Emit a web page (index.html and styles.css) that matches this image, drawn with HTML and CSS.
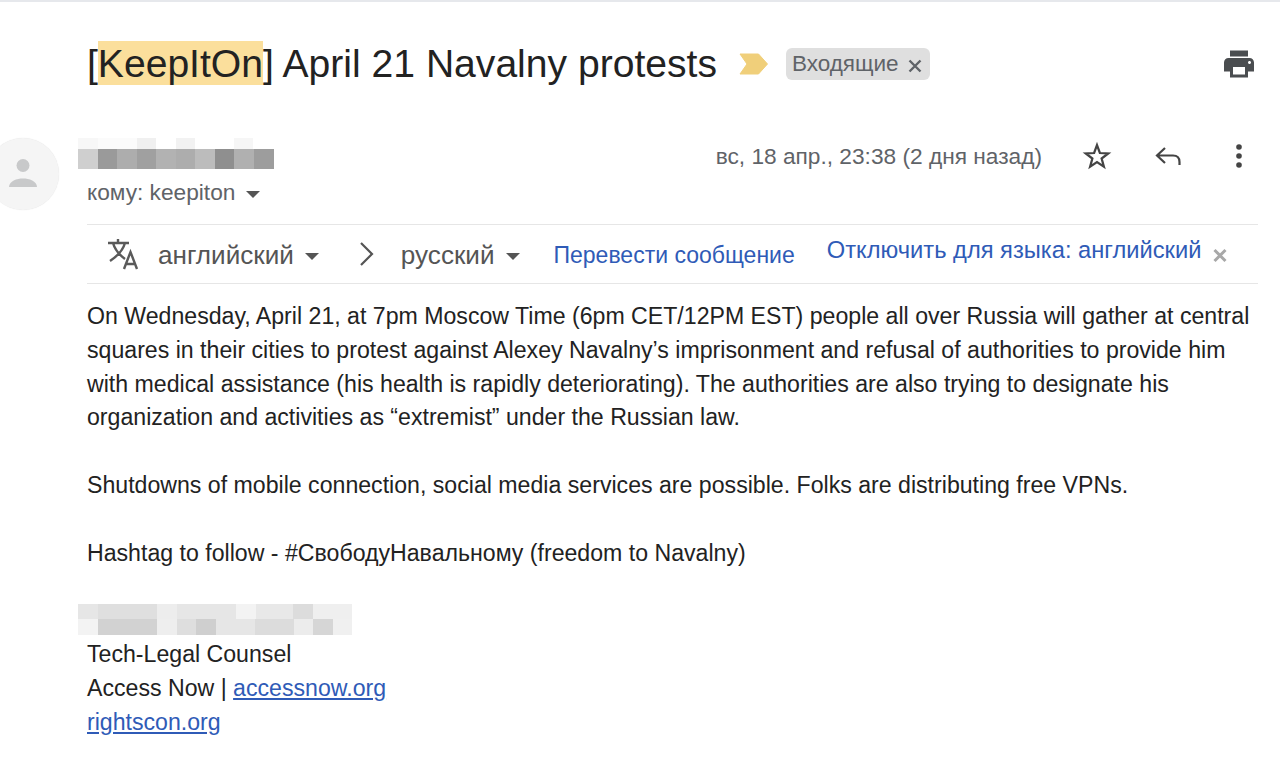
FILE: index.html
```html
<!DOCTYPE html>
<html lang="ru">
<head>
<meta charset="utf-8">
<title>[KeepItOn] April 21 Navalny protests</title>
<link rel="stylesheet" href="styles.css">
</head>
<body>
<main class="page">
  <header class="subject-row">
    <h1 class="subject">[<span class="hl">KeepItOn</span>] April 21 Navalny protests</h1>
    <svg class="marker" width="30" height="22" viewBox="0 0 30 22"><path d="M1 1H19.500L28.500 11L19.500 21H1L8 11Z" fill="#f0cf7a" stroke="#f0cf7a" stroke-linejoin="round"/></svg>
    <span class="label">Входящие<svg class="label-x" width="16" height="16" viewBox="0 0 16 16"><path d="M2.500 2.500L13.500 13.500M13.500 2.500L2.500 13.500" stroke="#5f6368" stroke-width="2.400"/></svg></span>
    <svg class="print" width="36" height="36" viewBox="0 0 24 24"><path d="M19 8H5c-1.660 0-3 1.340-3 3v6h4v4h12v-4h4v-6c0-1.660-1.340-3-3-3zm-3 11H8v-5h8v5zm3-7c-.55 0-1-.45-1-1s.45-1 1-1 1 .45 1 1-.45 1-1 1zm-1-9H6v4h12V3z" fill="#4a4d50"/></svg>
  </header>

  <section class="sender-row">
    <div class="avatar"><svg width="36" height="36" viewBox="0 0 36 36"><circle cx="18" cy="9.500" r="6.500" fill="#c8c9ca"/><path d="M4 31c0-6 8-8.500 14-8.500S32 25 32 31Z" fill="#c8c9ca"/></svg></div>
    <div class="sender-info">
      <svg class="blur-name" width="196" height="36" viewBox="0 0 196 36" shape-rendering="crispEdges">
        <g>
          <rect x="0" y="0" width="20" height="11" fill="#f7f7f7"/><rect x="20" y="0" width="39" height="11" fill="#fbfbfb"/><rect x="59" y="0" width="19" height="11" fill="#f0f0f0"/><rect x="98" y="0" width="19" height="11" fill="#f2f2f2"/><rect x="156" y="0" width="19" height="11" fill="#f6f6f6"/>
          <rect x="0" y="11" width="20" height="20" fill="#cfcfcf"/><rect x="20" y="11" width="19" height="20" fill="#9a9a9a"/><rect x="39" y="11" width="20" height="20" fill="#adadad"/><rect x="59" y="11" width="19" height="20" fill="#a0a0a0"/><rect x="78" y="11" width="20" height="20" fill="#b2b2b2"/><rect x="98" y="11" width="19" height="20" fill="#adadad"/><rect x="117" y="11" width="20" height="20" fill="#bcbcbc"/><rect x="137" y="11" width="19" height="20" fill="#8f8f8f"/><rect x="156" y="11" width="20" height="20" fill="#b0b0b0"/><rect x="176" y="11" width="20" height="20" fill="#9d9d9d"/>
        </g>
      </svg>
      <div class="to">кому: keepiton<span class="caret caret-to"></span></div>
    </div>
    <div class="meta">
      <span class="date">вс, 18 апр., 23:38 (2 дня назад)</span>
      <svg class="star" width="30" height="30" viewBox="0 0 24 24"><path d="M12 3.300L14.300 9.600L21 9.900L15.700 14L17.500 20.500L12 16.800L6.500 20.500L8.300 14L3 9.900L9.700 9.600Z" fill="none" stroke="#444" stroke-width="1.800" stroke-linejoin="miter"/></svg>
      <svg class="reply" width="30" height="30" viewBox="0 0 30 30"><path d="M12 7L4 14.500L12 22M4 14.500H20C24 14.500 26.500 17 26.500 21V24" fill="none" stroke="#444" stroke-width="2.200"/></svg>
      <svg class="dots" width="8" height="26" viewBox="0 0 8 26"><circle cx="4" cy="4" r="2.800" fill="#444"/><circle cx="4" cy="13" r="2.800" fill="#444"/><circle cx="4" cy="22" r="2.800" fill="#444"/></svg>
    </div>
  </section>

  <nav class="translate-bar">
    <svg class="tr-icon" width="36" height="36" viewBox="0 0 36 36"><path d="M3 7H24M13 3V7M8 7C10 14 16 20 20 23M20 7C18 14 11 21 5 25" fill="none" stroke="#5a5a5a" stroke-width="2.400"/><path d="M19 33L25.500 16L32 33M21.500 28H29.500" fill="none" stroke="#5a5a5a" stroke-width="2.400"/></svg>
    <span class="lang lang-from">английский<span class="caret"></span></span>
    <svg class="chev" width="18" height="26" viewBox="0 0 18 26"><path d="M3 2L14 13L3 24" fill="none" stroke="#555" stroke-width="2.200"/></svg>
    <span class="lang lang-to">русский<span class="caret"></span></span>
    <a class="tr-link tr-main" href="#">Перевести сообщение</a>
    <a class="tr-link tr-off" href="#">Отключить для языка: английский</a>
    <svg class="tr-x" width="16" height="16" viewBox="0 0 16 16"><path d="M2.500 3L13.500 14M13.500 3L2.500 14" stroke="#a8a8a8" stroke-width="3"/></svg>
  </nav>

  <article class="body">
    <p>On Wednesday, April 21, at 7pm Moscow Time (6pm CET/12PM EST) people all over Russia will gather at central squares in their cities to protest against Alexey Navalny’s imprisonment and refusal of authorities to provide him with medical assistance (his health is rapidly deteriorating). The authorities are also trying to designate his organization and activities as “extremist” under the Russian law.</p>
    <p>Shutdowns of mobile connection, social media services are possible. Folks are distributing free VPNs.</p>
    <p>Hashtag to follow - #СвободуНавальному (freedom to Navalny)</p>
    <svg class="blur-sig" width="274" height="31" viewBox="0 0 274 31" shape-rendering="crispEdges">
      <rect width="274" height="31" fill="#f1f1f1"/>
      <rect x="0" y="0" width="20" height="15" fill="#e6e6e6"/><rect x="20" y="0" width="59" height="15" fill="#dfdfdf"/><rect x="79" y="0" width="20" height="15" fill="#ededed"/><rect x="99" y="0" width="59" height="15" fill="#e6e6e6"/><rect x="158" y="0" width="20" height="15" fill="#f3f3f3"/><rect x="178" y="0" width="39" height="15" fill="#e8e8e8"/><rect x="215" y="0" width="20" height="15" fill="#dcdcdc"/><rect x="235" y="0" width="39" height="15" fill="#efefef"/>
      <rect x="0" y="15" width="20" height="16" fill="#f3f3f3"/><rect x="20" y="15" width="59" height="16" fill="#d2d2d2"/><rect x="79" y="15" width="20" height="16" fill="#eeeeee"/><rect x="99" y="15" width="19" height="16" fill="#dedede"/><rect x="118" y="15" width="20" height="16" fill="#cfcfcf"/><rect x="138" y="15" width="39" height="16" fill="#e6e6e6"/><rect x="177" y="15" width="39" height="16" fill="#dcdcdc"/><rect x="216" y="15" width="20" height="16" fill="#ececec"/><rect x="235" y="15" width="20" height="16" fill="#d6d6d6"/><rect x="255" y="15" width="19" height="16" fill="#f0f0f0"/>
    </svg>
    <div class="signature">
      <div>Tech-Legal Counsel</div>
      <div>Access Now | <a href="#">accessnow.org</a></div>
      <div><a href="#">rightscon.org</a></div>
    </div>
  </article>
</main>
</body>
</html>
```
FILE: styles.css
```css
* { box-sizing: border-box; }
html, body { margin: 0; height: 100%; }
body {
  background: #fff;
  font-family: "Liberation Sans", Arial, sans-serif;
  color: #222;
  overflow: hidden;
}
.page {
  height: 775px;
  border-top: 2px solid #e6e8ec;
  padding-right: 22px;
}
.subject-row {
  display: flex;
  align-items: flex-start;
  height: 76px;
  padding: 48px 0 0 87px;
}
.subject {
  margin: -8px 0 0;
  font-size: 39.100px;
  font-weight: 400;
  line-height: 44px;
  height: 44px;
  white-space: nowrap;
}
.hl { background: #fbdf9c; padding-top: 1px; }
.marker { margin: 3px 0 0 22px; }
.label {
  display: inline-flex;
  align-items: center;
  flex: none;
  width: 144px;
  height: 32px;
  margin: -2px 0 0 17px;
  padding: 0 6px;
  background: #dfdfdf;
  border-radius: 6px;
  font-size: 22.500px;
  color: #5f6368;
}
.label-x { margin-left: 8px; margin-top: 3px; }
.print { margin: -4px 1px 0 auto; }
.sender-row {
  display: flex;
  height: 146px;
  padding-top: 60px;
}
.avatar {
  width: 72px;
  height: 72px;
  margin-left: -13px;
  border-radius: 50%;
  background: #f5f5f5;
  box-shadow: 0 0 1px #ddd;
  display: flex;
  align-items: center;
  justify-content: center;
}
.sender-info { margin-left: 19px; }
.blur-name { display: block; }
.to {
  margin: 5px 0 0 9px;
  font-size: 22.700px;
  line-height: 26px;
  color: #5f6368;
}
.caret {
  display: inline-block;
  width: 0;
  height: 0;
  margin-left: 11px;
  vertical-align: middle;
  border-left: 7px solid transparent;
  border-right: 7px solid transparent;
  border-top: 7px solid #555;
}
.meta {
  margin-left: auto;
  padding-right: 15px;
  display: flex;
  align-items: center;
  height: 36px;
}
.date { font-size: 22.700px; color: #5f6368; }
.star { margin-left: 40px; }
.reply { margin-left: 41px; }
.dots { margin-left: 52px; }
.translate-bar {
  display: flex;
  align-items: center;
  height: 60px;
  margin-left: 87px;
  width: 1171px;
  border-top: 1px solid #e6e6e6;
  border-bottom: 1px solid #e6e6e6;
  color: #555;
}
.tr-icon { margin-left: 18px; }
.lang { font-size: 26.100px; margin-top: 2px; }
.lang-from { margin-left: 17px; }
.chev { margin-left: 39px; }
.lang-to { margin-left: 25px; }
.tr-link { color: #2f5bb7; text-decoration: none; }
.tr-main { margin-left: 34px; margin-top: 2px; font-size: 23px; }
.tr-off { margin-left: 32px; margin-top: -8px; font-size: 23.700px; }
.tr-x { margin-left: 11px; margin-top: 2px; }
.body {
  padding: 16px 0 0 87px;
  font-size: 23.130px;
  line-height: 33.800px;
}
.body p { margin: 0 0 33.800px; }
.blur-sig { display: block; margin: 14px 0 0 -9px; }
.signature { margin-top: 2px; line-height: 34px; }
.signature a { color: #2f5bb7; }
```
